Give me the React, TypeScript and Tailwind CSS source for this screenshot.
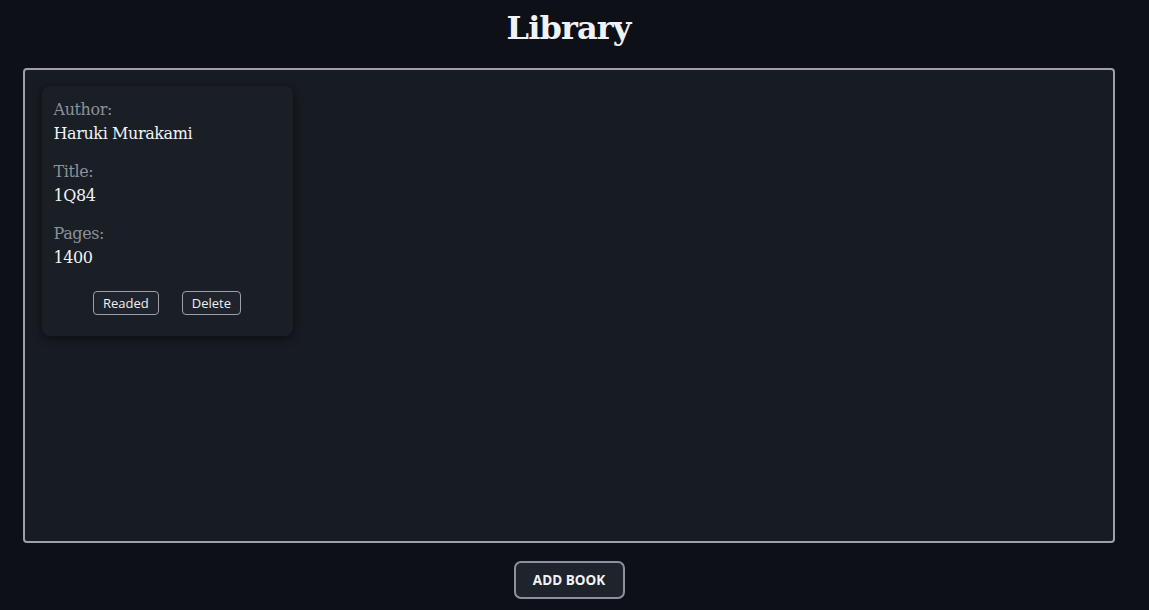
import React from "react";

const serif = { fontFamily: '"DejaVu Serif", "Liberation Serif", serif' };

function Field({ label, value }: { label: string; value: string }) {
  return (
    <div className="mb-[14px] tracking-[-0.4px]">
      <div className="text-[16px] leading-[24px] text-[#8b929b]">{label}</div>
      <div className="text-[16px] leading-[24px] text-[#f0f3f6]">{value}</div>
    </div>
  );
}

export default function App() {
  return (
    <div
      className="min-h-[610px] w-full bg-[#0d1017] flex flex-col items-center"
      style={serif}
    >
      <h1 className="mt-[6px] ml-[-12px] h-[44px] text-[32px] leading-[44px] font-bold tracking-[-0.9px] text-[#f0f3f6] font-['DejaVu_Serif',serif]">
        Library
      </h1>
      <div className="mt-[18px] w-[1092px] h-[475px] ml-[-12px] border-2 border-[#9aa1aa] rounded-[4px] bg-[#171b22] p-[16px] pl-[17px]">
        <div className="w-[251px] h-[250px] rounded-[8px] bg-[#1a1e25] shadow-[0_2px_8px_rgba(0,0,0,0.5)] pt-[12px] pl-[12px] pr-[11px] flex flex-col">
          <Field label="Author:" value="Haruki Murakami" />
          <Field label="Title:" value="1Q84" />
          <Field label="Pages:" value="1400" />
          <div className="mt-[7px] flex justify-center gap-[23px] pr-[1px] font-['Open_Sans',sans-serif]">
            <button className="h-[24px] px-[9px] border border-[#9aa1aa] rounded-[4px] bg-[#1f232b] text-[13px] text-[#eef1f4] leading-none">
              Readed
            </button>
            <button className="h-[24px] px-[9px] border border-[#9aa1aa] rounded-[4px] bg-[#1f232b] text-[13px] text-[#eef1f4] leading-none">
              Delete
            </button>
          </div>
        </div>
      </div>
      <button className="mt-[18px] ml-[-11px] w-[111px] h-[38px] border-2 border-[#8b929b] rounded-[7px] bg-[#1f232b] text-[13.5px] font-bold text-[#f0f3f6] font-['Open_Sans',sans-serif]">
        ADD BOOK
      </button>
    </div>
  );
}
